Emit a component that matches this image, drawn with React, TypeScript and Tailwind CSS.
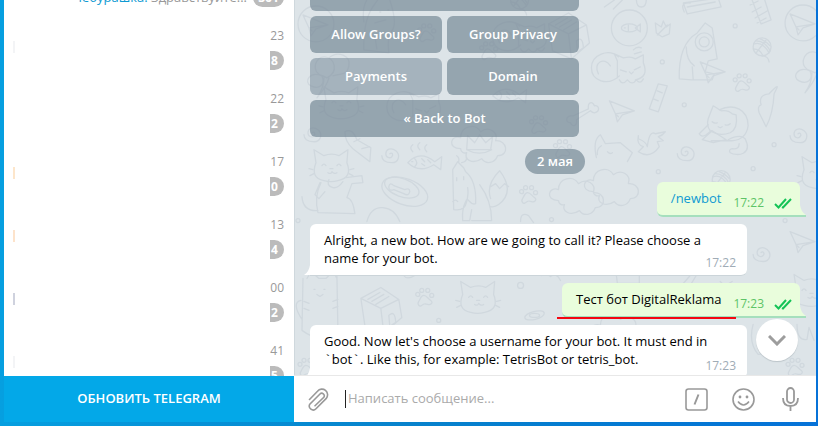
import { useState } from "react";

const chats = [
  { id: 1, time: "23", unread: "8", mark: "bg-gray-100" },
  { id: 2, time: "22", unread: "2", mark: "bg-white" },
  { id: 3, time: "17", unread: "0", mark: "bg-[#fde6cb]" },
  { id: 4, time: "13", unread: "4", mark: "bg-[#fde3cb]" },
  { id: 5, time: "00", unread: "2", mark: "bg-[#cfd2de]" },
  { id: 6, time: "41", unread: "5", mark: "bg-gray-100" },
];

const Checks = () => (
  <svg width="18" height="11" viewBox="0 0 18 11" fill="none" stroke="#14c356" strokeWidth="2">
    <path d="M1 6l3.500 3.500L12 1M8 9l1 .5L17 1" />
  </svg>
);

type MessageProps = {
  text: React.ReactNode;
  time: string;
  out?: boolean;
  link?: boolean;
  marked?: boolean;
};

const Message = ({ text, time, out, link, marked }: MessageProps) => {
  if (out) {
    return (
      <div className="relative self-end flex items-start gap-3 h-[35px] pl-3.5 pr-2 rounded-t-md rounded-bl-md bg-[#e9fddc] border-b-2 border-[#a5dfbd]">
        <p className="pt-[7px] text-[13px] leading-[18px]">
          {link ? (
            <a href="#newbot" className="text-[#0f9ad2]">
              {text}
            </a>
          ) : (
            text
          )}
        </p>
        <span className="flex items-center gap-2.5 pt-3 text-xs leading-[18px] text-[#5dc467]">
          {time}
          <Checks />
        </span>
        <svg className="absolute -right-1.5 -bottom-0.5" width="6" height="12" viewBox="0 0 6 12">
          <path d="M0 0Q1 7 6 10H0z" fill="#e9fddc" />
          <path d="M0 10h6v2H0z" fill="#a5dfbd" />
        </svg>
        {marked && (
          <span className="absolute -left-[5px] right-16 -bottom-[3px] h-0.5 bg-[#f30710]" />
        )}
      </div>
    );
  }
  return (
    <div className="relative self-start flex items-end justify-between w-[437px] max-w-full pl-3.5 pr-[11px] rounded-t-md rounded-br-md bg-white border-b border-[#cbd4d9]">
      <p className="w-[386px] shrink-0 pt-[7px] pb-2 text-[13px] leading-[18px]">{text}</p>
      <span className="-ml-4 pb-[3px] text-xs leading-[18px] text-[#a0acb6]">{time}</span>
      <svg className="absolute -left-1.5 bottom-0" width="6" height="10" viewBox="0 0 6 10">
        <path d="M6 0Q5 7 0 10h6z" fill="#fff" />
      </svg>
    </div>
  );
};

const Tick = () => <span className="font-['Liberation_Mono']">`</span>;

const Wallpaper = () => (
  <svg
    className="absolute inset-0 w-full h-full"
    viewBox="294 0 522 376"
    preserveAspectRatio="xMinYMin slice"
    fill="none"
    stroke="#d0d8de"
    strokeWidth="1.3"
    strokeLinecap="round"
    strokeLinejoin="round"
  >
    <defs>
      <g id="plane">
        <path d="M0 0l25 10-12 4-5 7-2-8zM6 13L25 10M6 13l3 3" />
      </g>
      <g id="paw">
        <path d="M8 7c3 0 4 3 7 5s0 5-3 4-4-1-6 1-5-1-3-4 2-6 5-6z" />
        <circle cx="2" cy="6" r="2" />
        <circle cx="6" cy="2" r="2" />
        <circle cx="12" cy="2" r="2" />
        <circle cx="16" cy="7" r="2" />
      </g>
      <g id="spiral">
        <path d="M8 8c2-2 4 1 2 3s-6 1-6-3 5-7 10-3 3 12-4 12S0 14 0 10" />
      </g>
      <g id="cat">
        <path d="M3 14L1 1l10 6q8-3 15 0l9-6-1 13q6 15-9 18-7 2-14 0-14-3-8-18z" />
        <path d="M9 17q2-3 4 0M24 17q2-3 4 0M17 20h3M15 24q3 2 4-1 2 3 5 1M0 21l-4-1M1 25l-4 2M37 21l4-1M36 25l4 2" />
      </g>
      <g id="sleeper">
        <path d="M28 25C16 36 0 30 0 17 0 4 17-3 27 6M26 27V10l-3-7 9 4q8-2 12 1l8-4v8q6 14-8 17M7 23c-6-11 6-18 12-8M29 19l6 2M43 19l6-3M38 21l2 2 2-2M28 29q3 6 8 0 5 6 9 0 4 5 7-1" />
      </g>
      <g id="balloons">
        <path d="M14 20C1 17 6 0 16 1s14 15 2 21zM24 20c9-3 14 0 16-10S29-6 20 2M13 20C1 15-6 26 2 30s15-1 11-10zM15 22q0 10-7 20M20 22q-2 8-12 20" />
      </g>
      <g id="cloud">
        <path d="M8 22C-6 22-2 7 8 11 8-1 23-4 28 5c8-6 18 0 15 9 12-1 14 15 2 15-3 8-12 9-16 3-9 6-18 1-15-6-3 1-6-1-6-4z" />
      </g>
      <g id="fish">
        <path d="M0 8Q12-5 27 7l7-5-1 13-7-5Q12 19 0 8zM7 4q4 4 0 8M4 7h1M14 4l3 3M14 9l3 2M20 5l3 3" />
      </g>
      <g id="bone">
        <path d="M7 13L22 6c-1-7 4-8 6-3 5-1 6 6 0 7-2 0-3-1-4-2L10 17c1 6-4 8-6 3-5 0-5-6 0-7z" />
      </g>
      <g id="yarn">
        <circle cx="9" cy="9" r="9" />
        <path d="M1 6q8-3 15 9M3 3q9 0 14 10M0 11q7 0 10 7M7 1q7 3 10 7M9 18q6 0 7 6M3 15L13 2" />
      </g>
      <g id="box">
        <path d="M0 11L20 0l18 12-18 9zM0 11l4 27 19 8 18-16-3-18M20 21l3 25M7 12l12-7M11 14l12-7M15 17l13-8M28 28q6-6 7 7l-6 4z" />
      </g>
      <g id="sitter">
        <path d="M2 42L1 2l5-8 6 6 2 4q11 9 10 32c-6 3-8-9-10-2M2 42q11 2 13-8 2-8 1-14M14 34q-4 8-3 19h7l2-11M20 53h20q0-20-12-36M5 10v3M12 9v3M1 34q3-3 5 0M7-6q1-4-2-6M10-5q5-1 5-5" />
        <path d="M39 31q-5-14 9-28 16 21-1 34-4 3-8 2M39 19l5-3 4 5 5-5 4 3" />
      </g>
    </defs>
    <circle cx="315" cy="24" r="18" />
    <use href="#plane" x="302" y="15" />
    <path d="M363 50q-1-31 11-46l7-10 8 6q8 24 2 31-5 6-3 22zM376 49l-2-13M374 23l11-3M379 12h1M387 10h1M366 0q-5 8-3 22" />
    <use href="#paw" x="417" y="24" />
    <use href="#balloons" x="308" y="56" />
    <use href="#yarn" x="510" y="-9" />
    <use href="#sleeper" x="492" y="20" />
    <use href="#box" x="548" y="13" />
    <use href="#sleeper" x="386" y="90" />
    <use href="#cat" x="322" y="86" />
    <use href="#paw" x="479" y="42" />
    <use href="#fish" x="492" y="88" />
    <use href="#bone" x="566" y="103" />
    <use href="#spiral" x="303" y="125" />
    <use href="#cat" x="312" y="149" />
    <path d="M344 132c5-3 9 0 12 8l14 8-1 14-17-13q-8-7-8-17zM353 142l6-3M361 149l8-2" />
    <use href="#spiral" x="381" y="146" />
    <use href="#fish" x="407" y="155" />
    <path d="M412 152q-4-4 0-7M419 150q-4-4 0-7M426 152q-4-4 0-7" />
    <use href="#cloud" x="452" y="127" />
    <path d="M466 150l1-14 7 7 5-8 6 8 7-6-2 13zM466 150q13 7 25 0" />
    <use href="#paw" x="529" y="116" />
    <use href="#paw" x="553" y="140" />
    <path d="M320 183q-7 14-3 30l37 1q-2-15-8-16l5-14 11-1-1-7-16 2M317 211q-15 1-16-14M328 180q-3 6 4 8 5 1 10-6M319 183l-5 12 4 4 6-7" />
    <ellipse cx="404" cy="192" rx="24" ry="13" transform="rotate(20 404 192)" />
    <ellipse cx="401" cy="188" rx="18" ry="9" transform="rotate(20 401 188)" />
    <path d="M388 187q1-5 5-1l11 4q5-2 5 2-1 5-6 2l-10-4q-5 2-5-3z" />
    <use href="#sitter" x="451" y="168" />
    <use href="#paw" x="519" y="186" />
    <path d="M366 222q4-15 16-14t17 14M520 222q0-10 8-6l5 7" />
    <use href="#cloud" x="550" y="179" />
    <circle cx="629" cy="28" r="18" />
    <ellipse cx="629" cy="28" rx="8" ry="4" />
    <path d="M635 28l5-4v8zM624 28h1M628 25v6" />
    <use href="#sleeper" x="591" y="51" />
    <path d="M655 23l6 4 2-6 3 6 4-3-1 10-7 3-6-4zM657 35l10-10M633 50q4-4 8-2M634 54l7-2" />
    <path d="M679 79q-1-35 18-46l8-10 7 5 5 31-9 2-3 11 9 2-2 6h-21zM693 80l-1-13M686 47q0 13 8 19" />
    <circle cx="704" cy="42" r="9" />
    <circle cx="704" cy="42" r="5" />
    <use href="#plane" x="700" y="62" />
    <path d="M683 3l35-5 3 9-34 7zM684 12q-5-10 6-9M687 7l28-5M636-1q0 8 5 8t5-8M614 0l-10 7M622 0l-9 9" />
    <path d="M752 0l9 24 10-4-7-22M750 5l8-4M752 12l9-5M755 18l12-7M757 23l9-5" />
    <circle cx="803" cy="23" r="18" />
    <use href="#plane" x="790" y="14" />
    <use href="#yarn" x="753" y="38" />
    <use href="#balloons" x="797" y="51" />
    <use href="#paw" x="733" y="74" />
    <path d="M658 84l9 2-9 26-9-3zM657 91l5 2M653 99l5 2" />
    <use href="#plane" x="609" y="101" />
    <path d="M761 105q-3-10 8-11l5-5q5-5 2 1l-2 4q-1 20-8 33l-7-14q-2-7 2-8z" />
    <path d="M708 119l5-13 8 5q7-1 11 3l4 1q2 14-6 18-11 4-20-2-4-5-2-12zM712 122q2 2 5 1M725 125q3 1 5-1M718 127l2 1 2-1" />
    <path d="M719 110c15-7 29 0 29 16q-2 14-16 15h-21M728 140q12-6 17-1c8 16-8 18-15 14q-2-3 2-4 7 1 7-5M708 125l-9 9q2 4 7 1l5-4M702 140l10-9 14 9-13 3z" />
    <use href="#spiral" x="790" y="126" />
    <path d="M638 139q8 3 9 8 2-17 8-13l10-2q-3 4-7 5l5 4-6 1 2 5q-9 13-21 5l5-5q-7-2-5-11z" />
    <use href="#spiral" x="677" y="144" />
    <path d="M596 158q-4-18 4-23l5 9 15-1 12 10-5 9M601 146q-5 3-4 9M607 152q2 3 5 1" />
    <use href="#cloud" x="585" y="170" />
    <use href="#yarn" x="712" y="171" />
    <use href="#cat" x="801" y="156" />
    <use href="#spiral" x="753" y="245" />
    <use href="#plane" x="790" y="232" />
    <use href="#cat" x="793" y="274" />
    <path d="M302 279l-1 52q20 15 36 0l-1-55M306 279l4-7 8 7h7l7-7 4 7M313 290h1M323 290h1M316 295l3 2 3-2M303 302l5 2M303 309l5 2M332 302l5-2M332 309l5-2M301 320q-11-17-1-19" />
    <use href="#box" x="360" y="288" />
    <use href="#paw" x="415" y="289" />
    <use href="#cat" x="459" y="281" />
    <ellipse cx="534" cy="316" rx="10" ry="4" transform="rotate(-14 534 316)" />
    <ellipse cx="534" cy="316" rx="5" ry="2" />
    <path d="M403 276q3 5 11 0M541 276q4-4 9 1 6-4 10 4M616 276l1 8h22v-8M690 276l-7 8M696 276l-6 10M720 282q4 6 12 0" />
    <use href="#cloud" x="592" y="315" />
    <path d="M753 325q-5 18 5 30 20 0 19-14M797 325q0 17 10 15l2-12 5 13" />
    <use href="#paw" x="786" y="359" />
    <use href="#paw" x="297" y="359" />
    <circle cx="735" cy="26" r="2" />
    <circle cx="662" cy="62" r="2" />
    <circle cx="684" cy="105" r="2" />
    <circle cx="774" cy="145" r="2" />
    <circle cx="658" cy="172" r="2" />
    <circle cx="753" cy="169" r="2" />
    <circle cx="297" cy="221" r="2" />
    <circle cx="551" cy="220" r="2" />
    <circle cx="785" cy="221" r="2" />
    <circle cx="520" cy="286" r="3" />
    <circle cx="438" cy="321" r="2" />
  </svg>
);

const keyClass =
  "flex-1 h-[37px] rounded-md bg-[#6e8291]/65 text-white text-[13px] font-semibold";

const App = () => {
  const [draft, setDraft] = useState("");

  return (
    <div
      className="flex h-screen pl-1 pr-0.5 pb-1 overflow-hidden bg-linear-to-r from-[#069fe0] via-[#0782cc] to-[#0672d8] text-black"
      style={{ fontFamily: '"Open Sans", "Noto Sans", sans-serif' }}
    >
      <aside className="flex flex-col w-[290px] shrink-0 bg-white">
        <div className="flex-1 min-h-0 overflow-hidden">
          <div className="-mt-3 h-[39px] flex items-start justify-end gap-1.5 pr-2.5">
            <p className="text-[13px] leading-[18px] text-[#999]">
              <span className="text-[#0f9ad2]">Чебурашка:</span> Здравствуйте...
            </p>
            <span className="w-[31px] h-[19px] rounded-full bg-[#bbb] text-center text-xs leading-[19px] font-bold text-white">
              361
            </span>
          </div>
          {chats.map((chat) => (
            <div key={chat.id} className="flex items-start justify-between h-[63px] pl-[9px] pr-2.5">
              <span className={`w-0.5 h-3 mt-3.5 ${chat.mark}`} />
              <div className="flex flex-col items-end gap-1.5">
                <time className="text-xs leading-[18px] text-[#999]">{chat.time}</time>
                <span className="w-3.5 h-[19px] pl-px rounded-r-full bg-[#bbb] text-xs leading-[19px] font-bold text-white">
                  {chat.unread}
                </span>
              </div>
            </div>
          ))}
        </div>
        <button className="h-[46px] shrink-0 bg-[#03a8e8] text-[13px] font-semibold text-white">
          ОБНОВИТЬ TELEGRAM
        </button>
      </aside>

      <main className="flex flex-col flex-1 min-w-0">
        <section className="relative flex-1 min-h-0 overflow-hidden border-l border-[#cfd8dd] bg-[#dde4e8]">
          <Wallpaper />
          <div className="relative flex flex-col -mt-[26px] pl-[15px] pr-4">
            <div className="flex flex-col gap-[5px] w-[269px]">
              <div className="flex">
                <button className={keyClass} aria-label="Inline Mode" />
              </div>
              <div className="flex gap-[5px]">
                <button className={keyClass}>Allow Groups?</button>
                <button className={keyClass}>Group Privacy</button>
              </div>
              <div className="flex gap-[5px]">
                <button className="flex-1 h-[37px] rounded-md bg-[#6e8291]/50 text-white text-[13px] font-semibold">
                  Payments
                </button>
                <button className={keyClass}>Domain</button>
              </div>
              <div className="flex">
                <button className={keyClass}>« Back to Bot</button>
              </div>
            </div>
            <span className="self-center my-3 px-3 h-[25px] rounded-full bg-[#6e8291]/65 text-[13px] leading-6 font-semibold text-white">
              2 мая
            </span>
            <div className="flex flex-col gap-[7px] -mt-1">
              <Message out link text="/newbot" time="17:22" />
              <Message
                text="Alright, a new bot. How are we going to call it? Please choose a name for your bot."
                time="17:22"
              />
              <Message out marked text="Тест бот DigitalReklama" time="17:23" />
              <Message
                text={
                  <>
                    Good. Now let's choose a username for your bot. It must end in <Tick />
                    bot
                    <Tick />. Like this, for example: TetrisBot or tetris_bot.
                  </>
                }
                time="17:23"
              />
            </div>
          </div>
          <button
            aria-label="Вниз"
            className="absolute right-[18px] bottom-3.5 flex items-center justify-center size-[42px] rounded-full bg-white shadow-[0_1px_1px_#bcc5ca]"
          >
            <svg width="18" height="11" viewBox="0 0 18 11" fill="none" stroke="#9d9d9d" strokeWidth="3">
              <path d="M1 1l8 8 8-8" />
            </svg>
          </button>
        </section>

        <footer className="flex items-center h-[47px] shrink-0 px-3.5 border-t border-[#e8e8e8] bg-white text-[#999]">
          <button aria-label="Прикрепить файл">
            <svg width="21" height="23" viewBox="0 0 21 23" fill="none" stroke="currentColor" strokeWidth="1.6" strokeLinecap="round">
              <path d="M1.500 11.500L9.500 3.200a5.600 5.600 0 0 1 8.800 7.200L8 20.800a3.900 3.900 0 0 1-6.200-4.600L12 6a2.500 2.500 0 0 1 3.800 3.200L7 17.800" />
            </svg>
          </button>
          <span className="w-px h-[18px] ml-4 bg-[#222]" />
          <input
            aria-label="Сообщение"
            placeholder="Написать сообщение..."
            value={draft}
            onChange={(e) => setDraft(e.target.value)}
            className="flex-1 min-w-0 pl-0.5 text-[13px] outline-none placeholder:text-[#aaa]"
          />
          <div className="flex items-center gap-6">
            <button aria-label="Команды">
              <svg width="23" height="23" viewBox="0 0 23 23" fill="none" stroke="currentColor" strokeWidth="1.6">
                <rect x="1" y="1" width="21" height="21" rx="2.500" />
                <path d="M13.500 6.500l-4 10" strokeWidth="2" />
              </svg>
            </button>
            <button aria-label="Эмодзи">
              <svg width="23" height="23" viewBox="0 0 23 23" fill="none" stroke="currentColor" strokeWidth="1.6">
                <circle cx="11.500" cy="11.500" r="10.500" />
                <path d="M6 13.500q5.500 7 11 0" />
                <circle cx="8" cy="9" r="1.400" fill="currentColor" stroke="none" />
                <circle cx="15" cy="9" r="1.400" fill="currentColor" stroke="none" />
              </svg>
            </button>
            <button aria-label="Голосовое сообщение">
              <svg width="23" height="24" viewBox="-2.500 0 23 24" fill="none" stroke="currentColor" strokeWidth="1.8">
                <rect x="5.500" y="1" width="7" height="15" rx="3.500" />
                <path d="M1.500 11q0 8 7.500 8t7.500-8M9 19v5" />
              </svg>
            </button>
          </div>
        </footer>
      </main>
    </div>
  );
};

export default App;
